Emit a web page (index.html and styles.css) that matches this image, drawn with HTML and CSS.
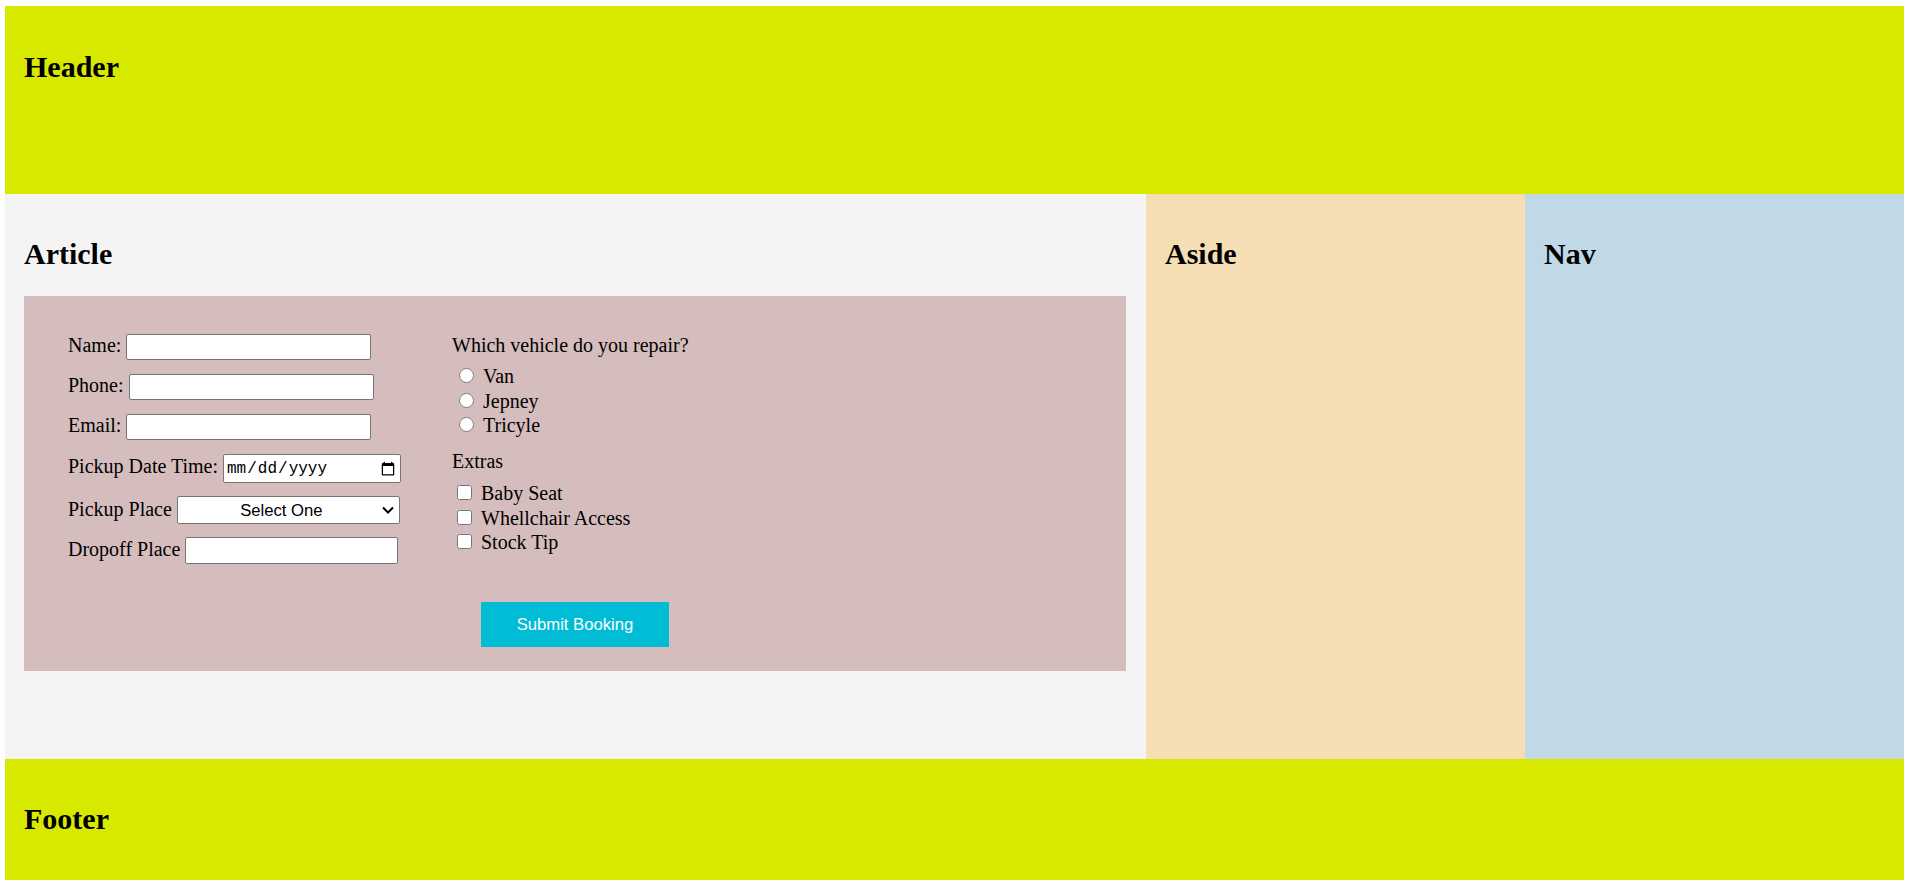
FILE: index.html
```html
<!DOCTYPE html>
<html lang="en">
<head>
<meta charset="utf-8">
<title>Booking</title>
<link rel="stylesheet" href="styles.css">
</head>
<body>
<div class="page">
  <header class="site-header"><h2>Header</h2></header>
  <article class="article">
    <h2>Article</h2>
    <form class="booking">
      <div class="booking-cols">
        <div class="fields">
          <div class="field"><label for="name">Name:</label><input id="name" class="input input-wide" type="text"></div>
          <div class="field"><label for="phone">Phone:</label><input id="phone" class="input input-wide" type="text"></div>
          <div class="field"><label for="email">Email:</label><input id="email" class="input input-wide" type="text"></div>
          <div class="field"><label for="pickup-time">Pickup Date Time:</label><input id="pickup-time" class="input input-date" type="date"></div>
          <div class="field field-tight"><label for="pickup-place">Pickup Place</label><span class="select-wrap"><select id="pickup-place" class="select"><option>Select One</option></select><svg class="chevron" width="12" height="8" viewBox="0 0 12 8"><path d="M1 1.5 L6 6.5 L11 1.5" fill="none" stroke="#000" stroke-width="2"/></svg></span></div>
          <div class="field field-tight"><label for="dropoff">Dropoff Place</label><input id="dropoff" class="input input-drop" type="text"></div>
        </div>
        <div class="choices">
          <div class="choice-title">Which vehicle do you repair?</div>
          <div class="choice-group radios">
            <label class="choice"><input type="radio" name="vehicle" class="radio"><span>Van</span></label>
            <label class="choice"><input type="radio" name="vehicle" class="radio"><span>Jepney</span></label>
            <label class="choice"><input type="radio" name="vehicle" class="radio"><span>Tricyle</span></label>
          </div>
          <div class="choice-title extras">Extras</div>
          <div class="choice-group checks">
            <label class="choice"><input type="checkbox" class="check"><span>Baby Seat</span></label>
            <label class="choice"><input type="checkbox" class="check"><span>Whellchair Access</span></label>
            <label class="choice"><input type="checkbox" class="check"><span>Stock Tip</span></label>
          </div>
        </div>
      </div>
      <div class="actions"><button type="button" class="submit">Submit Booking</button></div>
    </form>
  </article>
  <aside class="aside"><h2>Aside</h2></aside>
  <nav class="nav"><h2>Nav</h2></nav>
  <footer class="site-footer"><h2>Footer</h2></footer>
</div>
</body>
</html>
```

FILE: styles.css
```css
html {
  margin: 0;
  padding: 0;
}

body {
  margin: 6px 7px 6px 5px;
  font-family: "Liberation Serif", "Times New Roman", serif;
  font-size: 20px;
  color: #000;
}

.page {
  display: grid;
  grid-template-columns: 1141px 379px 1fr;
  grid-template-rows: 188px 565px 121px;
  grid-template-areas:
    "header header header"
    "article aside nav"
    "footer footer footer";
}

h2 {
  font-size: 30px;
  line-height: 34.5px;
  font-weight: bold;
  margin: 25px 0;
}

.site-header {
  grid-area: header;
  background: #d8e900;
  padding: 19px;
}

.article {
  grid-area: article;
  background: #f4f4f4;
  padding: 17.6px 20px 19px 19px;
}

.article h2 {
  margin-bottom: 25px;
}

.aside {
  grid-area: aside;
  background: #f5deb3;
  padding: 17.6px 19px 19px;
}

.nav {
  grid-area: nav;
  background: #c1d8e6;
  padding: 17.6px 19px 19px;
}

.site-footer {
  grid-area: footer;
  background: #d8e900;
  padding: 17.6px 19px 19px;
}

.booking {
  box-sizing: border-box;
  height: 375px;
  background: #d5bdbd;
  padding: 38px 44px 0;
  display: flex;
  flex-direction: column;
}

.booking-cols {
  display: grid;
  grid-template-columns: 384px 1fr;
}

.fields {
  display: flex;
  flex-direction: column;
  gap: 14px;
}

.field {
  display: flex;
  align-items: baseline;
  gap: 5px;
  line-height: 23px;
}

.field-tight {
  margin-top: -1px;
}

.input {
  box-sizing: border-box;
  margin: 0;
  border: 1px solid #767676;
  border-radius: 2px;
  background: #fff;
  padding: 1px 2px;
  font-family: "Liberation Sans", Arial, sans-serif;
  font-size: 16.67px;
}

.input-wide {
  width: 245px;
  height: 26px;
}

.input-date {
  width: 178px;
  height: 29px;
  font-family: "Liberation Mono", "Courier New", monospace;
  font-size: 16px;
}

.input-drop {
  width: 213px;
  height: 27px;
}

.select-wrap {
  position: relative;
  display: inline-flex;
}

.select {
  box-sizing: border-box;
  width: 223px;
  height: 28px;
  margin: 0;
  appearance: none;
  -webkit-appearance: none;
  background: #fff;
  border: 1px solid #767676;
  border-radius: 2px;
  padding: 0 16px 0 2px;
  font-family: "Liberation Sans", Arial, sans-serif;
  font-size: 16.67px;
  color: #000;
  text-align: center;
  text-align-last: center;
}

.chevron {
  position: absolute;
  right: 6px;
  top: 10px;
  pointer-events: none;
}

.choices {
  display: flex;
  flex-direction: column;
}

.choice-title {
  line-height: 23px;
  height: 23px;
}

.choice-group {
  display: flex;
  flex-direction: column;
}

.radios {
  margin-top: 7px;
}

.extras {
  margin-top: 12px;
}

.checks {
  margin-top: 8.5px;
}

.choice {
  display: block;
  height: 24.5px;
  line-height: 24.5px;
}

.radio {
  width: 15px;
  height: 15px;
  margin: 0 9px 0 7px;
  vertical-align: baseline;
}

.check {
  width: 15px;
  height: 15px;
  margin: 0 9px 2px 5px;
  vertical-align: baseline;
}

.actions {
  display: flex;
  justify-content: center;
  margin-top: 38px;
}

.submit {
  width: 188px;
  height: 45px;
  border: 0;
  margin: 0;
  background: #00bcd4;
  color: #fff;
  font-family: "Liberation Sans", Arial, sans-serif;
  font-size: 16.67px;
  cursor: pointer;
}
```
